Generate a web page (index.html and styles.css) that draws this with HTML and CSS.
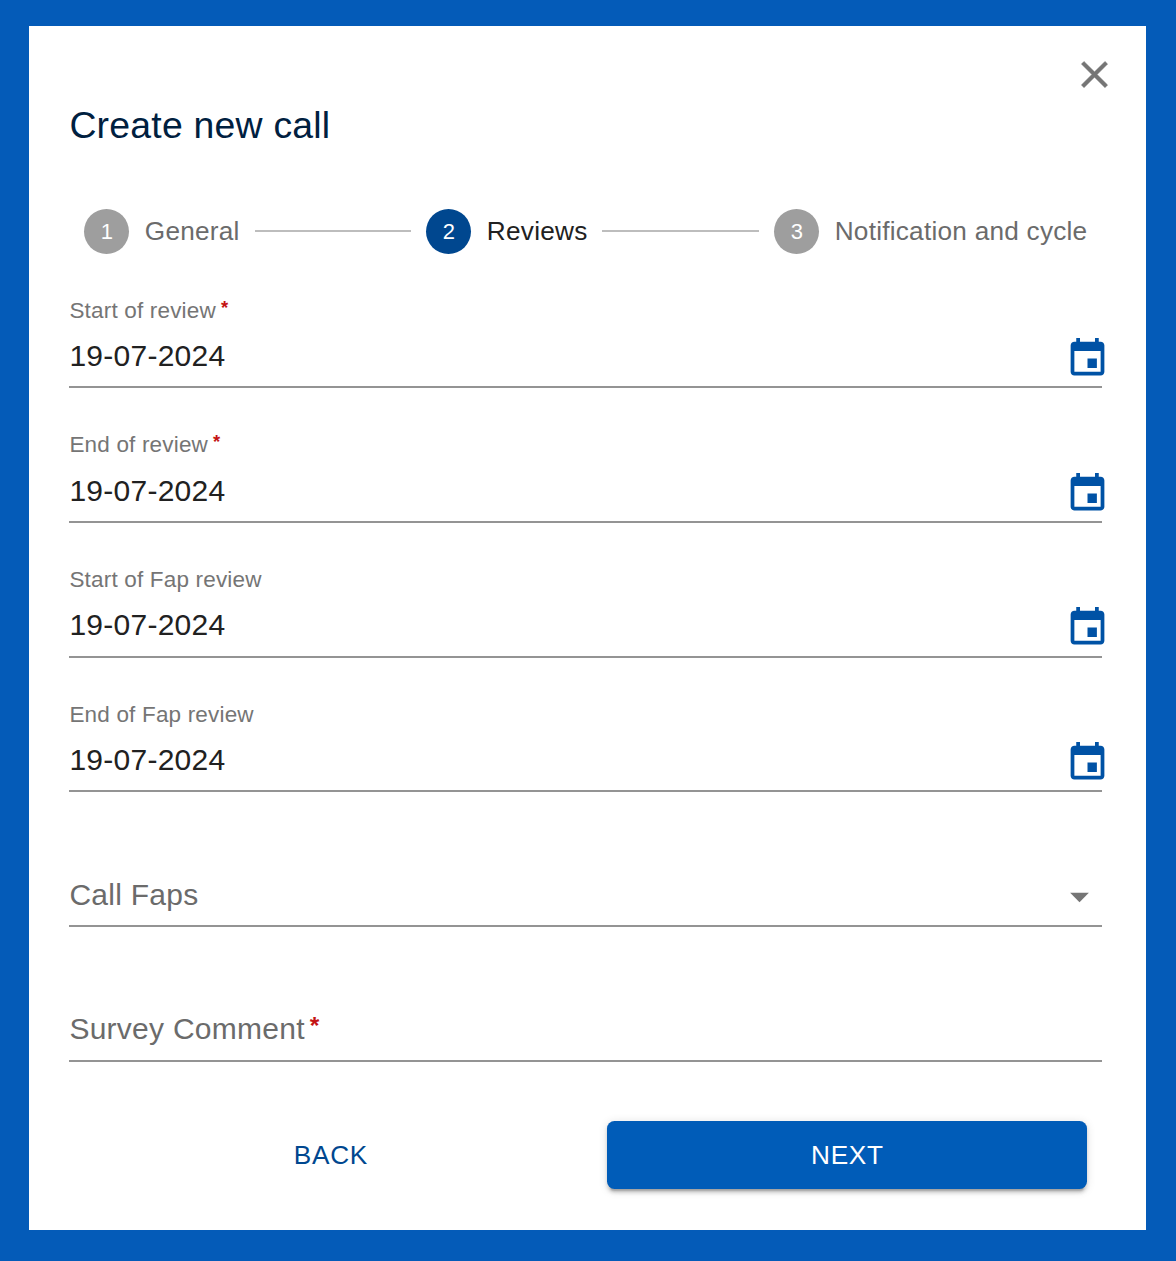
FILE: index.html
```html
<!DOCTYPE html>
<html lang="en">
<head>
<meta charset="utf-8">
<title>Create new call</title>
<link rel="stylesheet" href="styles.css">
</head>
<body>
<svg class="sprite" aria-hidden="true">
  <symbol id="calendar" viewBox="0 0 24 24"><path d="M17 12h-5v5h5v-5zM16 1v2H8V1H6v2H5c-1.11 0-1.99.9-1.99 2L3 19c0 1.1.89 2 2 2h14c1.1 0 2-.9 2-2V5c0-1.1-.9-2-2-2h-1V1h-2zm3 18H5V8h14v11z"/></symbol>
</svg>
<main class="dialog">
  <header class="dialog-header">
    <button class="close" aria-label="Close"><svg class="icon" viewBox="0 0 24 24"><path d="M19 6.41 17.59 5 12 10.59 6.41 5 5 6.41 10.59 12 5 17.59 6.41 19 12 13.41 17.59 19 19 17.59 13.41 12z"/></svg></button>
    <h1 class="title">Create new call</h1>
  </header>
  <div class="stepper">
    <div class="step"><span class="step-number">1</span><span>General</span></div>
    <span class="connector"></span>
    <div class="step active"><span class="step-number">2</span><span>Reviews</span></div>
    <span class="connector"></span>
    <div class="step"><span class="step-number">3</span><span>Notification and cycle</span></div>
  </div>
  <form class="form">
    <div class="field">
      <span class="label">Start of review<span class="required">*</span></span>
      <div class="control"><span class="value">19-07-2024</span><svg class="icon calendar"><use href="#calendar"/></svg></div>
    </div>
    <div class="field">
      <span class="label">End of review<span class="required">*</span></span>
      <div class="control"><span class="value">19-07-2024</span><svg class="icon calendar"><use href="#calendar"/></svg></div>
    </div>
    <div class="field">
      <span class="label">Start of Fap review</span>
      <div class="control"><span class="value">19-07-2024</span><svg class="icon calendar"><use href="#calendar"/></svg></div>
    </div>
    <div class="field">
      <span class="label">End of Fap review</span>
      <div class="control"><span class="value">19-07-2024</span><svg class="icon calendar"><use href="#calendar"/></svg></div>
    </div>
    <div class="field">
      <span class="label"></span>
      <div class="control"><span class="value placeholder">Call Faps</span><svg class="icon arrow" viewBox="0 0 24 24"><path d="m7 10 5 5 5-5z"/></svg></div>
    </div>
    <div class="field">
      <span class="label"></span>
      <div class="control"><span class="value placeholder">Survey Comment<span class="required">*</span></span></div>
    </div>
    <div class="actions">
      <button class="button" type="button">BACK</button>
      <button class="button primary" type="button">NEXT</button>
    </div>
  </form>
</main>
</body>
</html>
```
FILE: styles.css
```css
* { box-sizing: border-box; }

body {
  margin: 0;
  padding: 26px 30px 31px 29px;
  height: 1261px;
  background: #045bb8;
  font-family: "Liberation Sans", Arial, sans-serif;
  color: #212121;
}

button {
  border: 0;
  padding: 0;
  background: none;
  font-family: inherit;
}

.sprite { display: none; }

.dialog {
  height: 1204px;
  padding: 25.5px 43.6px 0 40.4px;
  background: #fff;
}

.icon {
  display: block;
  width: 45px;
  height: 45px;
  flex: none;
  fill: currentColor;
}

.dialog-header {
  display: flex;
  flex-direction: column;
}

.close {
  align-self: flex-end;
  margin-right: -15px;
  color: #757575;
}

.close .icon {
  stroke: currentColor;
  stroke-width: 0.25px;
}

.title {
  margin: 6.5px 0 0;
  font-size: 37.4px;
  line-height: 44px;
  font-weight: 400;
  letter-spacing: 0.22px;
  color: #00203f;
}

.stepper {
  display: flex;
  align-items: center;
  margin-top: 61.5px;
  padding: 0 15px;
  font-size: 26.2px;
  letter-spacing: 0.24px;
  color: #6b6b6b;
}

.step {
  display: flex;
  align-items: center;
  gap: 15.4px;
  white-space: nowrap;
}

.step-number {
  width: 45px;
  height: 45px;
  border-radius: 50%;
  background: #9e9e9e;
  color: #fff;
  font-size: 22px;
  line-height: 46px;
  letter-spacing: 0;
  text-align: center;
}

.active { color: #212121; }

.active .step-number { background: #00478f; }

.connector {
  flex: 1;
  height: 2px;
  margin: 0 15px;
  background: #bdbdbd;
}

.form { margin-top: 45.2px; }

.field {
  height: 89.7px;
  margin-bottom: 44.95px;
}

.label {
  display: block;
  height: 24px;
  line-height: 24px;
  font-size: 22.5px;
  letter-spacing: 0.18px;
  color: #757575;
}

.control {
  display: flex;
  align-items: center;
  justify-content: space-between;
  height: 65.7px;
  border-bottom: 2px solid #949494;
}

.value {
  padding-top: 3px;
  font-size: 30px;
  letter-spacing: 0.26px;
}

.placeholder { color: #6b6b6b; }

.required {
  position: relative;
  top: -0.07em;
  padding-left: 5px;
  font-size: 0.82em;
  font-weight: 700;
  line-height: 0;
  vertical-align: 0.14em;
  color: #c41414;
}

.calendar {
  margin: 8px -7.2px 0 0;
  color: #0052a5;
}

.arrow {
  margin-top: 7.5px;
  color: #757575;
}

.actions {
  display: grid;
  grid-template-columns: 1fr 480px;
  gap: 30px;
  margin-top: 59px;
  padding: 0 15px;
}

.button {
  height: 68px;
  padding-top: 2px;
  border-radius: 7.5px;
  font-size: 26.2px;
  letter-spacing: 0.7px;
  color: #00478f;
}

.primary {
  background: #005cb8;
  color: #fff;
  box-shadow: 0 5.6px 1.9px -3.7px rgba(0, 0, 0, 0.2), 0 3.7px 3.7px rgba(0, 0, 0, 0.14), 0 1.9px 9.4px rgba(0, 0, 0, 0.12);
}
```
